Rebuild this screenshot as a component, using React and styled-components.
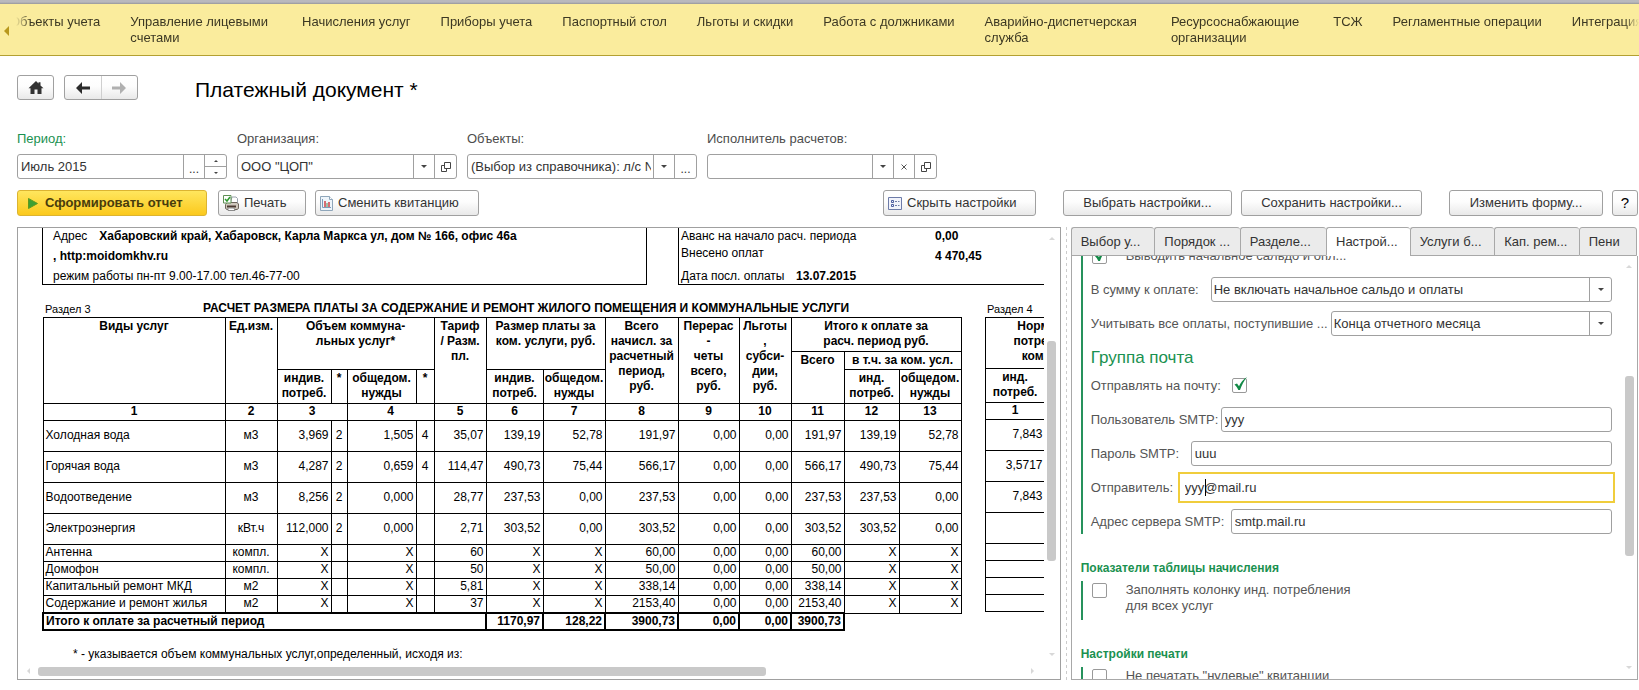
import React, { useState } from "react";
import styled, { createGlobalStyle, css } from "styled-components";

const GlobalStyle = createGlobalStyle`
  * {
    box-sizing: border-box;
  }

  body {
    margin: 0;
    background: #fff;
    color: #333;
    font-family: "Liberation Sans", Arial, sans-serif;
    font-size: 13px;
    line-height: 16px;
  }

  button,
  input,
  select {
    font: inherit;
    color: inherit;
  }
`;

const Page = styled.div`
  display: flex;
  flex-direction: column;
  height: 100vh;
  min-height: 480px;
  overflow: hidden;
`;

/* ---------- Sections bar ---------- */

const WindowEdge = styled.div`
  flex: none;
  height: 4px;
  background: linear-gradient(#b9b9bd 50%, #98989a);
`;

const SectionBar = styled.nav`
  flex: none;
  display: flex;
  height: 52px;
  overflow: hidden;
  background: #faec9d;
  border-bottom: 1px solid #b3a032;
`;

const ScrollLeft = styled.button`
  flex: none;
  width: 10px;
  padding: 4px 0 0 4px;
  border: 0;
  background: none;
  text-align: left;
`;

const SectionList = styled.div`
  flex: 1;
  min-width: 0;
  display: flex;
  gap: 30px;
  padding-top: 10px;
  overflow: hidden;
  mask-image: linear-gradient(
    to right,
    transparent 6px,
    #000 20px,
    #000 calc(100% - 14px),
    transparent
  );
`;

const SectionLink = styled.a`
  flex: none;
  color: #3c3823;
  text-decoration: none;
  white-space: pre;
  padding-right: ${(p) => (p.$wrapped ? "4px" : "0")};
`;

/* ---------- Form header ---------- */

const Header = styled.header`
  flex: none;
  display: flex;
  align-items: center;
  padding: 19px 16px 0 17px;
`;

const raised = css`
  border: 1px solid #a0a0a0;
  border-radius: 3px;
  background: linear-gradient(#fff, #fdfdfd 45%, #e9e9e9);
`;

const HomeButton = styled.button`
  ${raised}
  display: grid;
  place-items: center;
  width: 37px;
  height: 25px;
  padding: 0;
  margin-right: 10px;
`;

const HistoryGroup = styled.div`
  ${raised}
  display: flex;
  width: 74px;
  height: 25px;
  margin-right: 57px;
`;

const HistoryButton = styled.button`
  flex: 1;
  display: grid;
  place-items: center;
  padding: 0;
  border: 0;
  background: none;

  & + & {
    border-left: 1px solid #cfcfcf;
  }
`;

const Title = styled.h1`
  margin: 4px 0 0;
  font-size: 21px;
  line-height: 21px;
  font-weight: 400;
  color: #000;
`;

/* ---------- Filters ---------- */

const Filters = styled.div`
  flex: none;
  display: flex;
  gap: 10px;
  padding: 31px 16px 0 17px;
`;

const Filter = styled.div`
  flex: 0 1 ${(p) => p.$width}px;
  min-width: 0;
`;

const FilterLabel = styled.label`
  display: block;
  margin-bottom: 7px;
  color: ${(p) => (p.$accent ? "#1a9150" : "#4d4d4d")};
`;

const FieldBox = styled.div`
  position: relative;
  flex: 1;
  display: flex;
  min-width: 0;
  height: 25px;
  border: 1px solid #a0a0a0;
  border-radius: 3px;
  background: #fff;

  ${(p) =>
    p.$active &&
    css`
      border-color: #fff;
      border-radius: 0;
      outline: 2px solid #f0cd3c;
      outline-offset: 1px;
    `}
`;

const FieldInput = styled.input`
  flex: 1;
  min-width: 0;
  padding: 0 2px 0 3px;
  border: 0;
  outline: 0;
  background: none;
  color: #333;
`;

const FieldButton = styled.button`
  flex: none;
  display: grid;
  place-items: center;
  width: 21px;
  padding: 0;
  border: 0;
  border-left: 1px solid #a0a0a0;
  background: none;

  &:last-child {
    width: 22px;
  }
`;

const Dots = styled.span`
  padding-top: 4px;
  font-size: 12px;
  line-height: 12px;
`;

const Spinner = styled.div`
  flex: none;
  display: flex;
  flex-direction: column;
  width: 22px;
  border-left: 1px solid #a0a0a0;
`;

const SpinButton = styled.button`
  flex: 1;
  display: grid;
  place-items: center;
  padding: 0;
  border: 0;
  background: none;

  & + & {
    border-top: 1px solid #a0a0a0;
  }
`;

/* ---------- Commands ---------- */

const Commands = styled.div`
  flex: none;
  display: flex;
  gap: 9px;
  padding: 11px 1px 11px 17px;
`;

const Command = styled.button`
  ${raised}
  flex: none;
  display: flex;
  align-items: center;
  justify-content: ${(p) => (p.$center ? "center" : "flex-start")};
  gap: 5px;
  width: ${(p) => p.$width}px;
  height: 26px;
  padding: 0 4px;
  white-space: nowrap;

  ${(p) =>
    p.$primary &&
    css`
      gap: 7px;
      margin-right: 2px;
      padding: 0 10px;
      border-color: #dcb431;
      background: linear-gradient(#ffe65e, #fbc91d);
      color: #483c0c;
      font-weight: 700;
    `}
`;

const HelpCommand = styled(Command)`
  color: #000;
  font-size: 15px;
`;

const CommandGroup = styled.div`
  display: flex;
  gap: 9px;
  margin-left: ${(p) => (p.$push ? "auto" : "18px")};
`;

/* ---------- Work area ---------- */

const WorkArea = styled.main`
  flex: 1;
  min-height: 0;
  display: flex;
  padding: 0 1px 10px 17px;
`;

const Report = styled.section`
  flex: 1043 1 0;
  min-width: 0;
  display: flex;
  flex-direction: column;
  border: 1px solid #a0a0a0;
  color: #000;
  font-size: 12px;
  line-height: 15px;
`;

const ReportBody = styled.div`
  flex: 1;
  min-height: 0;
  display: flex;
`;

const Sheet = styled.div`
  flex: 1;
  min-width: 0;
  overflow: hidden;
  padding-left: 24px;
`;

const SheetRow = styled.div`
  display: flex;
  align-items: flex-start;
  width: max-content;
`;

const AddressBox = styled.div`
  width: 605px;
  height: 57px;
  margin-right: 31px;
  padding-left: 10px;
  border: solid #000;
  border-width: 0 1px 1px;
  white-space: pre;

  p {
    margin: 0;
    height: 20px;
    line-height: 16px;
  }

  p > b {
    margin-left: 12px;
  }
`;

const TotalsBox = styled.dl`
  width: 500px;
  height: 57px;
  margin: 0;
  padding-left: 2px;
  border: solid #000;
  border-width: 0 0 1px 1px;
  line-height: 16px;
`;

const TotalLine = styled.div`
  display: grid;
  grid-template-columns: ${(p) => p.$label}px 1fr;
  height: 20px;

  dt {
    line-height: ${(p) => (p.$raised ? 10 : 16)}px;
  }

  dd {
    margin: 0;
    font-weight: 700;
  }
`;

const CaptionRow = styled.div`
  display: flex;
  align-items: flex-end;
  width: max-content;
  height: 32px;
  font-size: 11px;
`;

const CaptionCell = styled.div`
  width: ${(p) => p.$width}px;
  padding-left: 3px;
`;

const Caption = styled.h2`
  width: 781px;
  margin: 0;
  font-size: 12px;
  line-height: 17px;
  font-weight: 700;
`;

const Table = styled.table`
  width: ${(p) => p.$width}px;
  margin-right: ${(p) => p.$gap || 0}px;
  table-layout: fixed;
  border-collapse: collapse;
  line-height: 15px;

  th,
  td {
    height: 17px;
    padding: 0 2px 1px;
    border: 1px solid #000;
    text-align: right;
    white-space: nowrap;
  }

  th {
    padding: 1px 0;
    text-align: center;
    vertical-align: top;
    white-space: pre;
  }

  tbody th {
    padding: 0;
  }
`;

const Row = styled.tr`
  height: ${(p) => p.$height}px;
`;

const NameCell = styled.td`
  && {
    text-align: left;
  }
`;

const MidCell = styled.td`
  && {
    text-align: center;
  }
`;

const TotalCell = styled.td`
  && {
    padding-bottom: 0;
    border: 2px solid #000;
    font-weight: 700;
    text-align: ${(p) => (p.$left ? "left" : "right")};
  }
`;

const BlankCell = styled.td`
  && {
    border: 0;
  }
`;

const Footnote = styled.p`
  margin: 16px 0 0 31px;
`;

/* ---------- Scroll bars ---------- */

const Bar = styled.div`
  flex: none;
  display: flex;
  flex-direction: ${(p) => (p.$vertical ? "column" : "row")};
  align-items: center;
  padding: ${(p) => p.$pad};
  ${(p) => (p.$vertical ? "width: 16px;" : "height: 13px;")}
`;

const Space = styled.div`
  flex: ${(p) => p.$size} 1 0;
`;

const Thumb = styled.div`
  flex: ${(p) => p.$size} 1 0;
  border-radius: 3px;
  background: #c9c9c9;
  ${(p) => (p.$vertical ? "width: 9px;" : "height: 9px;")}
`;

const Splitter = styled.div`
  flex: none;
  width: 10px;
  padding-left: 5px;

  &::before {
    content: "";
    display: block;
    width: 1px;
    height: 100%;
    background: repeating-linear-gradient(#ccc 0 3px, transparent 3px 6px);
  }
`;

/* ---------- Settings ---------- */

const Settings = styled.section`
  flex: 568 1 0;
  min-width: 0;
  display: flex;
  flex-direction: column;
`;

const Tabs = styled.div`
  flex: none;
  display: flex;
  padding-right: 1px;
`;

const Tab = styled.button`
  flex: ${(p) => p.$size} 1 0;
  min-width: 0;
  height: 29px;
  padding: 0 0 0 9px;
  border: 1px solid #a8a8a8;
  border-right-width: 0;
  border-radius: 3px 3px 0 0;
  background: #ebebeb;
  text-align: left;
  white-space: nowrap;

  &:last-child {
    border-right-width: 1px;
  }

  &[aria-selected="true"] {
    background: #fff;
    border-bottom-color: #fff;
  }
`;

const SettingsBody = styled.div`
  flex: 1;
  min-height: 0;
  display: flex;
  border: 1px solid #a8a8a8;
  border-top: 0;
`;

const SettingsScroll = styled.div`
  flex: 1;
  min-width: 0;
  overflow: hidden;
  padding: 0 9px;
`;

const Group = styled.div`
  display: flex;
  flex-direction: column;
  gap: 9px;
  padding-left: 8px;
  border-left: 2px solid #26925c;
  margin-top: ${(p) => p.$top}px;
  min-height: ${(p) => p.$min || 0}px;
`;

const SettingRow = styled.div`
  display: flex;
  align-items: center;
  height: 25px;
`;

const SettingLabel = styled.label`
  flex: none;
  width: ${(p) => p.$width}px;
  color: #555;
  white-space: nowrap;
`;

const GroupTitle = styled.h2`
  margin: 3px 0 -3px;
  font-size: 17px;
  line-height: 19px;
  font-weight: 400;
  color: #1a9150;
`;

const SectionTitle = styled.h3`
  margin: 26px 0 0;
  font-size: 12px;
  line-height: 16px;
  font-weight: 700;
  color: #1a9150;
`;

const Select = styled.select`
  flex: 1;
  min-width: 0;
  padding: 0 0 0 2px;
  border: 0;
  outline: 0;
  appearance: none;
  background: none;
`;

const SelectArrow = styled.span`
  display: grid;
  place-items: center;
  width: 22px;
  border-left: 1px solid #a0a0a0;
  pointer-events: none;
`;

const Caret = styled.i`
  position: absolute;
  top: 3px;
  left: 23px;
  width: 1px;
  height: 17px;
  background: #000;
`;

const CheckWrap = styled.span`
  position: relative;
  flex: none;
  display: block;
  width: 15px;
  height: 15px;

  svg {
    position: absolute;
    left: 2px;
    bottom: 2px;
    pointer-events: none;
  }
`;

const CheckInput = styled.input`
  display: block;
  width: 15px;
  height: 15px;
  margin: 0;
  appearance: none;
  border: 1px solid #999;
  border-radius: 2px;
  background: #fff;
`;

const CheckRow = styled.div`
  display: flex;
  align-items: flex-start;
  gap: 19px;
  padding: 2px 0 0 1px;

  label {
    margin-top: -1px;
    color: #555;
    white-space: pre;
  }
`;

/* ---------- Icons ---------- */

const TriDown = ({ size = 6, color = "#444" }) => (
  <svg width={size} height={size / 2} viewBox="0 0 6 3">
    <path d="M0 0h6L3 3z" fill={color} />
  </svg>
);

const TriUp = ({ size = 6, color = "#444" }) => (
  <svg width={size} height={size / 2} viewBox="0 0 6 3">
    <path d="M0 3h6L3 0z" fill={color} />
  </svg>
);

const TriSide = ({ left, color = "#d8d8d8", size = 6 }) => (
  <svg width={size / 2} height={size} viewBox="0 0 3 6">
    <path d={left ? "M3 0v6L0 3z" : "M0 0v6l3-3z"} fill={color} />
  </svg>
);

const HomeIcon = () => (
  <svg width="16" height="13" viewBox="0 0 16 13">
    <path
      d="M8 0 0.5 7.2h2V13h4V8.5h3V13h4V7.2h2L12.5 4.4V1.2h-2v1.3z"
      fill="#333"
    />
  </svg>
);

const ArrowIcon = ({ right }) => (
  <svg width="14" height="12" viewBox="0 0 14 12">
    <path
      d={right ? "M14 6 8 0v4.500H0v3h8V12z" : "M0 6l6-6v4.500h8v3H6V12z"}
      fill={right ? "#b0b0b0" : "#2b2b2b"}
    />
  </svg>
);

const OpenIcon = () => (
  <svg width="10" height="10" viewBox="0 0 10 10" fill="none" stroke="#444">
    <path d="M3.500 0.500h6v6h-6z" />
    <path d="M3 3.500H0.500v6h5V7" />
  </svg>
);

const CrossIcon = () => (
  <svg width="6" height="6" viewBox="0 0 6 6" stroke="#555">
    <path d="M0.500 0.500l5 5M5.500 0.500l-5 5" />
  </svg>
);

const PlayIcon = () => (
  <svg width="10" height="11" viewBox="0 0 10 11">
    <path d="M0.500 0.500v10l9-5z" fill="#3fa033" stroke="#5f9a1e" />
  </svg>
);

const PrintIcon = () => (
  <svg width="16" height="16" viewBox="0 0 16 16">
    <path d="M9 2h4l1.500 1.500V9H7z" fill="#fff" stroke="#9aa3ad" />
    <path
      d="M2.500 9.500l1.500-2h10l1.500 1.500v4.500l-1.500 1h-10l-1.500-1z"
      fill="#cfc8bd"
      stroke="#6d655c"
    />
    <path d="M4 11.500h9" stroke="#4b3a31" strokeWidth="2" />
    <path d="M5 13h6l1 2.500H5z" fill="#fff" stroke="#8b8b8b" />
    <path d="M0.500 0.500h7.500v7.500H0.500z" fill="#fff" stroke="#5f8f55" />
    <path d="M2 4l2 2 3-4" fill="none" stroke="#2e9a2e" strokeWidth="1.500" />
  </svg>
);

const ChartIcon = () => (
  <svg width="13" height="15" viewBox="0 0 13 15">
    <path d="M0.500 0.500h9l3 3v11H0.500z" fill="#eef5fb" stroke="#8fa6ba" />
    <path d="M9.500 0.500v3h3" fill="#fff" stroke="#8fa6ba" />
    <path d="M2.500 3v8.500H11" fill="none" stroke="#7d9bbb" />
    <path d="M5 5v6M9 6v5" stroke="#cf4047" strokeWidth="1.500" />
    <path d="M7 7v4" stroke="#4a8a5a" />
  </svg>
);

const SettingsIcon = () => (
  <svg width="14" height="13" viewBox="0 0 14 13" fill="none">
    <path d="M0.500 0.500h13v12H0.500z" fill="#f1f3fb" stroke="#6d7ba8" />
    <path d="M3.500 3.500h2v2h-2zM3.500 7.500h2v2h-2z" stroke="#4b5da0" />
    <path d="M7 4.500h2M10 4.500h1.500M7 8.500h2M10 8.500h1.500" stroke="#6d7ba8" />
  </svg>
);

const Tick = () => (
  <svg width="14" height="14" viewBox="0 0 14 14">
    <path
      d="M0.500 7.500 3 6.500l2 2.700C6.500 6 9 2.500 13 0 10 4 7.500 8.500 6 13H4.300C3.500 11 2 9 0.500 7.500z"
      fill="#128a47"
    />
  </svg>
);

/* ---------- Data ---------- */

const sections = [
  "Объекты учета",
  "Управление лицевыми\nсчетами",
  "Начисления услуг",
  "Приборы учета",
  "Паспортный стол",
  "Льготы и скидки",
  "Работа с должниками",
  "Аварийно-диспетчерская\nслужба",
  "Ресурсоснабжающие\nорганизации",
  "ТСЖ",
  "Регламентные операции",
  "Интеграция",
];

const columns = [182, 52, 54, 16, 69, 18, 52, 57, 62, 73, 61, 52, 53, 55, 62];

const services = [
  ["Холодная вода", "м3", "3,969", "2", "1,505", "4", "35,07", "139,19", "52,78", "191,97", "0,00", "0,00", "191,97", "139,19", "52,78"],
  ["Горячая вода", "м3", "4,287", "2", "0,659", "4", "114,47", "490,73", "75,44", "566,17", "0,00", "0,00", "566,17", "490,73", "75,44"],
  ["Водоотведение", "м3", "8,256", "2", "0,000", "", "28,77", "237,53", "0,00", "237,53", "0,00", "0,00", "237,53", "237,53", "0,00"],
  ["Электроэнергия", "кВт.ч", "112,000", "2", "0,000", "", "2,71", "303,52", "0,00", "303,52", "0,00", "0,00", "303,52", "303,52", "0,00"],
  ["Антенна", "компл.", "X", "", "X", "", "60", "X", "X", "60,00", "0,00", "0,00", "60,00", "X", "X"],
  ["Домофон", "компл.", "X", "", "X", "", "50", "X", "X", "50,00", "0,00", "0,00", "50,00", "X", "X"],
  ["Капитальный ремонт МКД", "м2", "X", "", "X", "", "5,81", "X", "X", "338,14", "0,00", "0,00", "338,14", "X", "X"],
  ["Содержание и ремонт жилья", "м2", "X", "", "X", "", "37", "X", "X", "2153,40", "0,00", "0,00", "2153,40", "X", "X"],
];

const totals = ["1170,97", "128,22", "3900,73", "0,00", "0,00", "3900,73"];

const norms = ["7,843", "3,5717", "7,843", "", "", "", "", ""];

const tabs = [
  ["Выбор у...", 84],
  ["Порядок ...", 86],
  ["Разделе...", 87],
  ["Настрой...", 84],
  ["Услуги б...", 85],
  ["Кап. рем...", 85],
  ["Пени", 54],
];

const rowHeight = (i) => (i < 4 ? 31 : 17);

/* ---------- Parts ---------- */

const ChargesTable = () => (
  <Table $width={919} $gap={23}>
    <colgroup>
      {columns.map((w, i) => (
        <col key={i} width={w} />
      ))}
    </colgroup>
    <thead>
      <Row $height={34}>
        <th rowSpan={3}>Виды услуг</th>
        <th rowSpan={3}>Ед.изм.</th>
        <th rowSpan={2} colSpan={4}>{"Объем коммуна-\nльных услуг*"}</th>
        <th rowSpan={3}>{"Тариф\n/ Разм.\nпл."}</th>
        <th rowSpan={2} colSpan={2}>{"Размер платы за\nком. услуги, руб."}</th>
        <th rowSpan={3}>{"Всего\nначисл. за\nрасчетный\nпериод,\nруб."}</th>
        <th rowSpan={3}>{"Перерас\n-\nчеты\nвсего,\nруб."}</th>
        <th rowSpan={3}>{"Льготы\n,\nсубси-\nдии,\nруб."}</th>
        <th colSpan={3}>{"Итого к оплате за\nрасч. период руб."}</th>
      </Row>
      <Row $height={17}>
        <th rowSpan={2}>Всего</th>
        <th colSpan={2}>в т.ч. за ком. усл.</th>
      </Row>
      <Row $height={34}>
        <th>{"индив.\nпотреб."}</th>
        <th>*</th>
        <th>{"общедом.\nнужды"}</th>
        <th>*</th>
        <th>{"индив.\nпотреб."}</th>
        <th>{"общедом.\nнужды"}</th>
        <th>{"инд.\nпотреб."}</th>
        <th>{"общедом.\nнужды"}</th>
      </Row>
    </thead>
    <tbody>
      <Row $height={17}>
        {Array.from({ length: 13 }, (_, i) => (
          <th key={i} colSpan={i === 2 || i === 3 ? 2 : 1}>
            {i + 1}
          </th>
        ))}
      </Row>
      {services.map((cells, i) => (
        <Row key={cells[0]} $height={rowHeight(i)}>
          {cells.map((cell, j) => {
            if (j === 0) return <NameCell key={j}>{cell}</NameCell>;
            if (j === 1 || j === 3 || j === 5) return <MidCell key={j}>{cell}</MidCell>;
            return <td key={j}>{cell}</td>;
          })}
        </Row>
      ))}
      <Row $height={17}>
        <TotalCell $left colSpan={7}>
          Итого к оплате за расчетный период
        </TotalCell>
        {totals.map((t, i) => (
          <TotalCell key={i}>{t}</TotalCell>
        ))}
        <BlankCell colSpan={2} />
      </Row>
    </tbody>
  </Table>
);

const NormsTable = () => (
  <Table $width={135}>
    <colgroup>
      <col width={60} />
      <col width={74} />
    </colgroup>
    <thead>
      <Row $height={51}>
        <th colSpan={2}>{"Нормативы\nпотребления\nком. услуг"}</th>
      </Row>
      <Row $height={34}>
        <th>{"инд.\nпотреб."}</th>
        <th />
      </Row>
    </thead>
    <tbody>
      <Row $height={17}>
        <th>1</th>
        <th />
      </Row>
      {norms.map((n, i) => (
        <Row key={i} $height={rowHeight(i)}>
          <td>{n}</td>
          <td />
        </Row>
      ))}
    </tbody>
  </Table>
);

const Checkbox = ({ id, defaultChecked = false }) => {
  const [checked, setChecked] = useState(defaultChecked);
  return (
    <CheckWrap>
      <CheckInput
        type="checkbox"
        id={id}
        checked={checked}
        onChange={(e) => setChecked(e.target.checked)}
      />
      {checked && <Tick />}
    </CheckWrap>
  );
};

const TextSetting = ({ id, label, width, value, active }) => (
  <SettingRow>
    <SettingLabel htmlFor={id} $width={width}>
      {label}
    </SettingLabel>
    <FieldBox $active={active}>
      <FieldInput id={id} defaultValue={value} />
      {active && <Caret />}
    </FieldBox>
  </SettingRow>
);

const SelectSetting = ({ id, label, width, value }) => (
  <SettingRow>
    <SettingLabel htmlFor={id} $width={width}>
      {label}
    </SettingLabel>
    <FieldBox>
      <Select id={id}>
        <option>{value}</option>
      </Select>
      <SelectArrow>
        <TriDown />
      </SelectArrow>
    </FieldBox>
  </SettingRow>
);

const App = () => {
  const [tab, setTab] = useState(3);

  return (
    <Page>
      <GlobalStyle />
      <WindowEdge />
      <SectionBar>
        <ScrollLeft aria-label="Назад">
          <TriSide left size={10} color="#b8981c" />
        </ScrollLeft>
        <SectionList>
          {sections.map((s) => (
            <SectionLink key={s} href="#" $wrapped={s.includes("\n")}>
              {s}
            </SectionLink>
          ))}
        </SectionList>
      </SectionBar>

      <Header>
        <HomeButton aria-label="Домой">
          <HomeIcon />
        </HomeButton>
        <HistoryGroup>
          <HistoryButton aria-label="Назад">
            <ArrowIcon />
          </HistoryButton>
          <HistoryButton aria-label="Вперед" disabled>
            <ArrowIcon right />
          </HistoryButton>
        </HistoryGroup>
        <Title>Платежный документ *</Title>
      </Header>

      <Filters>
        <Filter $width={210}>
          <FilterLabel htmlFor="period" $accent>
            Период:
          </FilterLabel>
          <FieldBox>
            <FieldInput id="period" defaultValue="Июль 2015" />
            <FieldButton aria-label="Выбрать период">
              <Dots>...</Dots>
            </FieldButton>
            <Spinner>
              <SpinButton aria-label="Больше">
                <TriUp size={4} />
              </SpinButton>
              <SpinButton aria-label="Меньше">
                <TriDown size={4} />
              </SpinButton>
            </Spinner>
          </FieldBox>
        </Filter>
        <Filter $width={220}>
          <FilterLabel htmlFor="org">Организация:</FilterLabel>
          <FieldBox>
            <FieldInput id="org" defaultValue={'ООО "ЦОП"'} />
            <FieldButton aria-label="Список">
              <TriDown />
            </FieldButton>
            <FieldButton aria-label="Открыть">
              <OpenIcon />
            </FieldButton>
          </FieldBox>
        </Filter>
        <Filter $width={230}>
          <FilterLabel htmlFor="objects">Объекты:</FilterLabel>
          <FieldBox>
            <FieldInput id="objects" defaultValue="(Выбор из справочника): л/с №" />
            <FieldButton aria-label="Список">
              <TriDown />
            </FieldButton>
            <FieldButton aria-label="Выбрать">
              <Dots>...</Dots>
            </FieldButton>
          </FieldBox>
        </Filter>
        <Filter $width={230}>
          <FilterLabel htmlFor="executor">Исполнитель расчетов:</FilterLabel>
          <FieldBox>
            <FieldInput id="executor" />
            <FieldButton aria-label="Список">
              <TriDown />
            </FieldButton>
            <FieldButton aria-label="Очистить">
              <CrossIcon />
            </FieldButton>
            <FieldButton aria-label="Открыть">
              <OpenIcon />
            </FieldButton>
          </FieldBox>
        </Filter>
      </Filters>

      <Commands>
        <Command $primary $width={190}>
          <PlayIcon />
          Сформировать отчет
        </Command>
        <Command $width={88}>
          <PrintIcon />
          Печать
        </Command>
        <Command $width={164}>
          <ChartIcon />
          Сменить квитанцию
        </Command>
        <CommandGroup $push>
          <Command $width={153}>
            <SettingsIcon />
            Скрыть настройки
          </Command>
        </CommandGroup>
        <CommandGroup>
          <Command $center $width={169}>Выбрать настройки...</Command>
          <Command $center $width={181}>Сохранить настройки...</Command>
        </CommandGroup>
        <CommandGroup>
          <Command $center $width={154}>Изменить форму...</Command>
          <HelpCommand $center $width={26}>?</HelpCommand>
        </CommandGroup>
      </Commands>

      <WorkArea>
        <Report>
          <ReportBody>
            <Sheet>
              <SheetRow>
                <AddressBox>
                  <p>
                    Адрес<b>Хабаровский край, Хабаровск, Карла Маркса ул, дом № 166, офис 46а</b>
                  </p>
                  <p>
                    <strong>, http:moidomkhv.ru</strong>
                  </p>
                  <p>режим работы пн-пт 9.00-17.00 тел.46-77-00</p>
                </AddressBox>
                <TotalsBox>
                  <TotalLine $label={254}>
                    <dt>Аванс на начало расч. периода</dt>
                    <dd>0,00</dd>
                  </TotalLine>
                  <TotalLine $label={254} $raised>
                    <dt>Внесено оплат</dt>
                    <dd>4 470,45</dd>
                  </TotalLine>
                  <TotalLine $label={115}>
                    <dt>Дата посл. оплаты</dt>
                    <dd>13.07.2015</dd>
                  </TotalLine>
                </TotalsBox>
              </SheetRow>
              <CaptionRow>
                <CaptionCell $width={161}>Раздел 3</CaptionCell>
                <Caption>
                  РАСЧЕТ РАЗМЕРА ПЛАТЫ ЗА СОДЕРЖАНИЕ И РЕМОНТ ЖИЛОГО ПОМЕЩЕНИЯ И КОММУНАЛЬНЫЕ УСЛУГИ
                </Caption>
                <CaptionCell $width={131}>Раздел 4</CaptionCell>
              </CaptionRow>
              <SheetRow>
                <ChargesTable />
                <NormsTable />
              </SheetRow>
              <Footnote>* - указывается объем коммунальных услуг,определенный, исходя из:</Footnote>
            </Sheet>
            <Bar $vertical $pad="9px 0 10px">
              <TriUp color="#d8d8d8" />
              <Space $size={101} />
              <Thumb $vertical $size={218} />
              <Space $size={92} />
              <TriDown color="#d8d8d8" />
            </Bar>
          </ReportBody>
          <Bar $pad="0 26px 3px 9px">
            <TriSide left />
            <Space $size={8} />
            <Thumb $size={728} />
            <Space $size={265} />
            <TriSide />
          </Bar>
        </Report>

        <Splitter />

        <Settings>
          <Tabs role="tablist">
            {tabs.map(([name, size], i) => (
              <Tab
                key={name}
                role="tab"
                aria-selected={i === tab}
                $size={size}
                onClick={() => setTab(i)}
              >
                {name}
              </Tab>
            ))}
          </Tabs>
          <SettingsBody>
            <SettingsScroll>
              <Group $top={-13}>
                <SettingRow>
                  <CheckRow>
                    <Checkbox id="opening" defaultChecked />
                    <label htmlFor="opening">Выводить начальное сальдо и опл...</label>
                  </CheckRow>
                </SettingRow>
                <SelectSetting
                  id="sum"
                  label="В сумму к оплате:"
                  width={120}
                  value="Не включать начальное сальдо и оплаты"
                />
                <SelectSetting
                  id="payments"
                  label="Учитывать все оплаты, поступившие ..."
                  width={240}
                  value="Конца отчетного месяца"
                />
                <GroupTitle>Группа почта</GroupTitle>
                <SettingRow>
                  <SettingLabel htmlFor="send" $width={141}>
                    Отправлять на почту:
                  </SettingLabel>
                  <Checkbox id="send" defaultChecked />
                </SettingRow>
                <TextSetting id="user" label="Пользователь SMTP:" width={130} value="yyy" />
                <TextSetting id="password" label="Пароль SMTP:" width={100} value="uuu" />
                <TextSetting id="sender" label="Отправитель:" width={90} value="yyy@mail.ru" active />
                <TextSetting id="server" label="Адрес сервера SMTP:" width={140} value="smtp.mail.ru" />
              </Group>

              <SectionTitle>Показатели таблицы начисления</SectionTitle>
              <Group $top={5} $min={39}>
                <CheckRow>
                  <Checkbox id="fill" />
                  <label htmlFor="fill">{"Заполнять колонку инд. потребления\nдля всех услуг"}</label>
                </CheckRow>
              </Group>

              <SectionTitle>Настройки печати</SectionTitle>
              <Group $top={5} $min={39}>
                <CheckRow>
                  <Checkbox id="zero" />
                  <label htmlFor="zero">{'Не печатать "нулевые" квитанции'}</label>
                </CheckRow>
              </Group>
            </SettingsScroll>
            <Bar $vertical $pad="9px 0 10px">
              <TriUp color="#d8d8d8" />
              <Space $size={108} />
              <Thumb $vertical $size={179} />
              <Space $size={110} />
              <TriDown color="#d8d8d8" />
            </Bar>
          </SettingsBody>
        </Settings>
      </WorkArea>
    </Page>
  );
};

export default App;
